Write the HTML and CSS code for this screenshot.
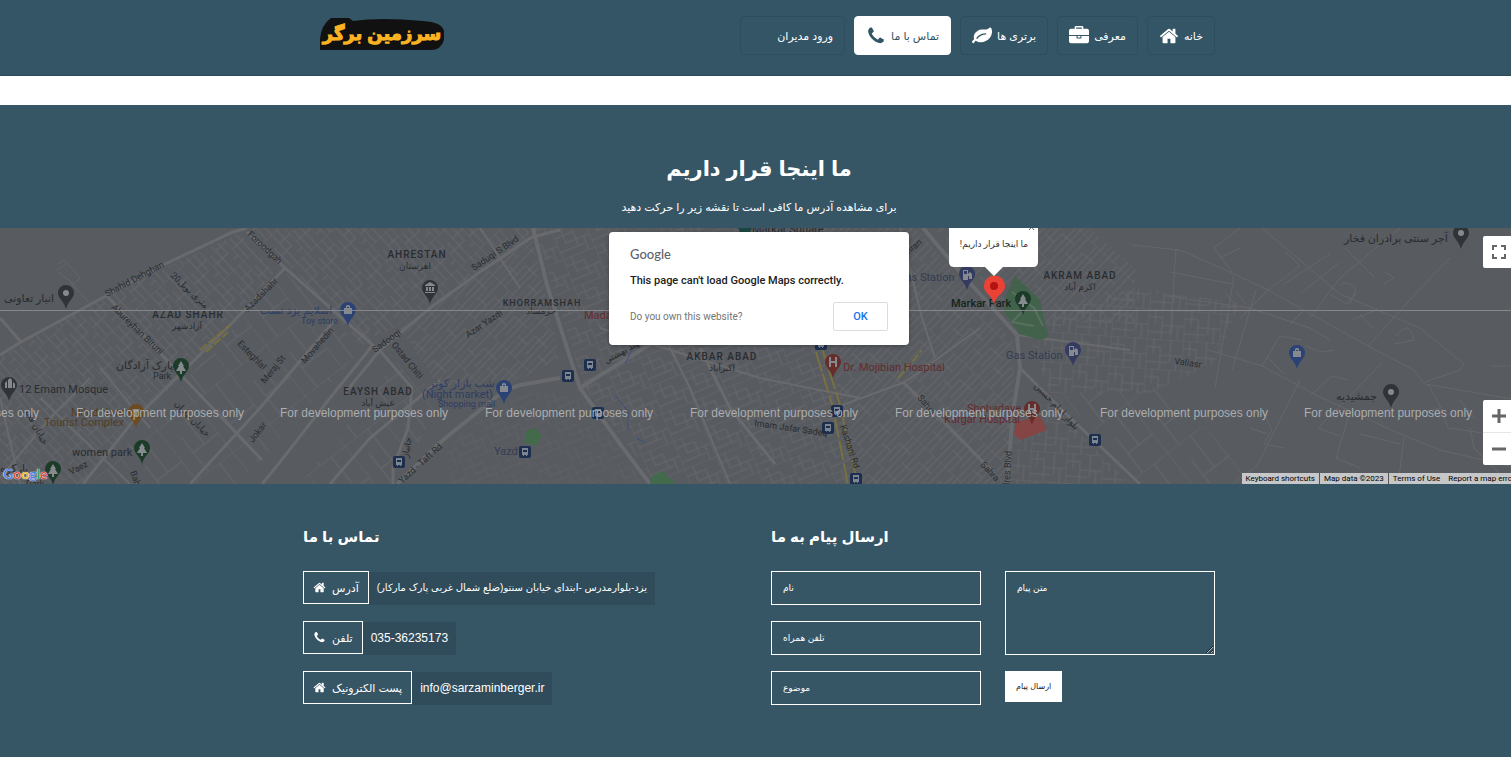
FILE: index.html
```html
<!DOCTYPE html>
<html lang="fa">
<head>
  <meta charset="UTF-8">
  <meta name="viewport" content="width=device-width, initial-scale=1.0">
  <title>سرزمین برگر</title>
  <link rel="stylesheet" href="styles.css">
</head>
<body>

<!-- shared icons -->
<svg class="defs" width="0" height="0">
  <symbol id="i-home" viewBox="0 0 1792 1792"><path d="M1472 992v480q0 26-19 45t-45 19h-384v-384h-256v384h-384q-26 0-45-19t-19-45v-480q0-1 .5-3t.5-3l575-474 575 474q1 2 1 6zm223-69l-62 74q-8 9-21 11h-3q-13 0-21-7l-692-577-692 577q-12 8-24 7-13-2-21-11l-62-74q-8-10-7-23.5t11-21.5l719-599q32-26 76-26t76 26l244 204v-195q0-14 9-23t23-9h192q14 0 23 9t9 23v408l219 182q10 8 11 21.5t-7 23.5z"/></symbol>
  <symbol id="i-phone" viewBox="0 0 1792 1792"><path d="M1600 1240q0 27-10 70.5t-21 68.5q-21 50-122 106-94 51-186 51-27 0-53-3.5t-57-12.5-47-14.5-55.5-20.5-49.5-18q-98-35-175-83-127-79-264-216t-216-264q-48-77-83-175-3-9-18-49.5t-20.5-55.5-14.5-47-12.5-57-3.5-53q0-92 51-186 56-101 106-122 25-11 68.5-21t70.5-10q14 0 21 3 18 6 53 76 11 19 30 54t35 63.5 31 53.5q3 4 17.5 25t21.5 35.5 7 28.5q0 20-28.5 50t-62 55-62 53-28.5 46q0 9 5 22.5t8.5 20.5 14 24 11.5 19q76 137 174 235t235 174q2 1 19 11.5t24 14 20.5 8.5 22.5 5q18 0 46-28.5t53-62 55-62 50-28.5q14 0 28.5 7t35.5 21.5 25 17.5q25 15 53.5 31t63.5 35 54 30q70 35 76 53 3 7 3 21z"/></symbol>
  <symbol id="i-case" viewBox="0 0 1792 1792"><path d="M640 256h512v-128h-512v128zm1152 640v480q0 66-47 113t-113 47h-1472q-66 0-113-47t-47-113v-480h672v160q0 26 19 45t45 19h320q26 0 45-19t19-45v-160h672zm-768 0v128h-256v-128h256zm768-480v384h-1792v-384q0-66 47-113t113-47h352v-160q0-40 28-68t68-28h576q40 0 68 28t28 68v160h352q66 0 113 47t47 113z"/></symbol>
  <symbol id="i-leaf" viewBox="0 0 1792 1792"><path d="M1280 704q0-26-19-45t-45-19q-172 0-318 49.5t-259.5 134-235.5 219.5q-19 21-19 45 0 26 19 45t45 19q24 0 45-19 27-24 74-71t67-66q137-124 268.5-176t313.5-52q26 0 45-19t19-45zm512-198q0 95-20 193-46 224-184.5 383t-357.5 268q-214 108-438 108-148 0-286-47-15-5-88-42t-96-37q-16 0-39.5 32t-45 70-52.5 70-60 32q-43 0-63.5-17.5t-45.5-59.5q-2-4-6-11t-5.5-10-3-9.5-1.5-13.5q0-35 31-73.5t68-65.5 68-56 31-48q0-4-14-38t-16-44q-9-51-9-104 0-115 43.5-220t119-184.5 170.5-139 204-95.5q55-18 145-25.5t179.5-9 178.5-6 163.5-24 113.5-56.5l29.5-29.5 29.5-28 27-20 36.5-16 43.5-4.5q39 0 70.5 46t47.5 112 24 124 8 96z"/></symbol>
  <symbol id="m-pin" viewBox="0 0 16 24"><path d="M8 0a8 8 0 0 1 8 8c0 5-6 8-8 16-2-8-8-11-8-16a8 8 0 0 1 8-8z"/></symbol>
  <symbol id="m-bus" viewBox="0 0 12 12"><rect width="12" height="12" rx="2" fill="#1c2f4f"/><path d="M3 2h6v7H8v1H7V9H5v1H4V9H3z" fill="#7d8590"/><path d="M4 4h4v2H4z" fill="#1c2f4f"/></symbol>
</svg>

<div class="page">

  <header class="site-header">
    <div class="container header-inner">
      <a class="logo" href="#" aria-label="سرزمین برگر">
        <svg width="126" height="35" viewBox="0 0 126 35">
          <path d="M1 34V23Q2 9 12 2H30L34 5Q62 1 104 5Q123 6 125 15V24Q122 34 112 34Z" fill="#111"/>
          <text x="63" y="24" text-anchor="middle" direction="rtl">سرزمین برگر</text>
        </svg>
      </a>
      <nav class="main-nav" dir="rtl">
        <a href="#home">خانه <svg><use href="#i-home"/></svg></a>
        <a href="#about">معرفی <svg><use href="#i-case"/></svg></a>
        <a href="#features">برتری ها <svg><use href="#i-leaf"/></svg></a>
        <a href="#contact" class="active">تماس با ما <svg><use href="#i-phone"/></svg></a>
        <a href="#login">ورود مدیران <svg></svg></a>
      </nav>
    </div>
  </header>

  <section class="contact" id="contact">
    <div class="section-title">
      <h1 dir="rtl">ما اینجا قرار داریم</h1>
      <p dir="rtl">برای مشاهده آدرس ما کافی است تا نقشه زیر را حرکت دهید</p>
    </div>

    <div class="map">
      <svg class="map-canvas" height="256" viewBox="0 0 1518 256" preserveAspectRatio="xMinYMin slice">
        <defs>
          <pattern id="g1" width="38" height="26" patternUnits="userSpaceOnUse" patternTransform="rotate(47)"><path d="M0 0H38M0 7H22M0 14H38M12 21H38M0 0V26M12 0V14M22 7V26M30 0V7"/></pattern>
          <pattern id="g2" width="34" height="30" patternUnits="userSpaceOnUse" patternTransform="rotate(-22)"><path d="M0 0H34M0 8H20M8 16H34M0 23H26M0 0V30M9 0V16M20 8V23M28 16V30"/></pattern>
          <pattern id="g3" width="44" height="28" patternUnits="userSpaceOnUse" patternTransform="rotate(-46)"><path d="M0 0H44M0 6H44M0 12H30M10 18H44M0 23H44M0 0V28M18 0V12M30 12V28"/></pattern>
          <pattern id="g4" width="36" height="30" patternUnits="userSpaceOnUse" patternTransform="rotate(4)"><path d="M0 0H36M0 8H14M14 16H36M0 23H22M0 0V30M7 0V15M14 8V30M24 0V23M30 16V30"/></pattern>
          <pattern id="g5" width="64" height="46" patternUnits="userSpaceOnUse" patternTransform="rotate(52)"><path d="M0 0H64M0 18H40M20 32H64M0 0V46M40 0V32"/></pattern>
        </defs>

        <rect width="1518" height="256" fill="#585b60"/>

        <!-- side streets -->
        <g class="streets">
          <path fill="url(#g1)" d="M108 66L240 5L275 45L83 256H0V130Z"/>
          <path fill="url(#g1)" d="M250 0H400L530 0L532 12L400 96L362 118Z"/>
          <path fill="url(#g5)" d="M285 44L362 120L240 256H90Z"/>
          <path fill="url(#g5)" d="M300 256L400 130L440 170L400 256Z"/>
          <path fill="url(#g3)" d="M400 100L532 12L560 130L520 152L440 160Z"/>
          <path fill="url(#g2)" d="M534 0H800L830 130L860 256H656L585 160Z"/>
          <path fill="url(#g3)" d="M800 0H915L1015 115L1010 256H862L830 130Z"/>
          <path fill="url(#g3)" d="M935 0H1090L1135 40V95H1020Z"/>
          <path fill="url(#g4)" d="M1024 95L1135 60L1240 75L1215 135L1150 165H1050Z"/>
          <path fill="url(#g4)" d="M1017 180L1050 175L1130 256H1010Z"/>
          <path fill="url(#g5)" d="M1060 165L1160 160L1270 256H1140Z"/>
          <path fill="url(#g2)" d="M520 165L580 165L645 256H450L445 215Z" opacity=".5"/>
        </g>
        <g class="lanes">
          <path d="M58 36L64 32L80 50L74 56L58 44M70 54L90 76M66 36L57 42"/>
          <path d="M1131 17L1180 22L1230 44L1268 62L1368 118L1414 142L1425 156L1518 172"/>
          <path d="M1176 22L1170 110M1234 48L1215 160M1256 62L1232 142M1170 44L1232 56M1166 68L1250 80L1310 100L1330 112"/>
          <path d="M1262 0L1340 66L1420 100L1464 136L1460 142L1425 154M1310 90L1340 50L1400 0M1286 24L1300 38L1268 62L1240 90"/>
          <path d="M1232 44L1214 20L1240 0M1220 30L1240 20M1284 56L1330 26M1300 66L1340 34M1345 20L1375 50M1368 118L1430 50L1450 30M1385 44L1394 50L1384 56"/>
          <path d="M1208 122L1262 138L1318 168L1400 206L1440 222L1518 240M1300 152L1288 176L1276 200L1258 236L1240 256"/>
          <path d="M1262 138L1280 108L1302 112M1310 168L1332 148L1348 152M1382 135L1318 200L1340 208M1348 190L1336 230L1360 240M1360 206L1400 216M1404 210L1398 256"/>
          <path d="M1262 182L1272 202L1264 216L1284 220M1250 200L1268 206M1428 156L1440 178L1448 200L1490 206M1440 180L1418 186M1470 200L1474 220L1510 256"/>
          <path d="M1340 58Q1348 50 1356 62L1350 76M1330 66L1346 76L1356 66M1360 86L1372 100M1352 92L1376 82M1396 108Q1410 90 1414 112L1394 116"/>
          <path d="M1236 64L1246 76M1226 66L1236 78M1306 118L1320 124L1334 122M1268 130L1284 146M1290 96L1302 84M1460 172L1474 190M1490 138H1518"/>
        </g>
        <g class="mains">
          <path d="M0 127L21 114L163 37L233 4L247 0M0 90L21 114"/>
          <path d="M247 4L285 40L350 97L382 125L412 160L408 200L393 240V256" />
          <path d="M285 40L230 97L133 193L83 256M107 68L160 125L222 190L262 232"/>
          <path d="M372 118L330 170L280 234L262 256M440 152L370 210L330 256M335 92L260 180L190 256"/>
          <path d="M532 9L480 44L430 80L380 122L345 165M532 9L560 2"/>
          <path d="M533 0L547 57L567 120L580 160L623 220L650 256M580 160L660 110L740 60" stroke-width="4"/>
          <path d="M560 150L520 157L505 162L443 212L397 256" stroke-width="4"/>
          <path d="M923 0L960 44L1017 107L1020 140L1013 184L1007 256" stroke-width="4"/>
          <path d="M1020 140L1060 180L1140 256M903 154L940 190L993 244M700 120L730 180L775 236"/>
        </g>
        <g class="thin-mains">
          <path d="M0 250L50 190L90 150M20 256L0 170M40 170L130 256M100 140L150 200M480 0L520 60M640 60L690 160L730 256M600 100L760 150L860 170M840 178L905 154L980 100M1017 107L1130 122M900 0L922 90L935 130"/>
        </g>

        <!-- parks, hospital, yellow roads -->
        <path fill="#42624c" d="M1015 48L1040 72L1046 100Q1052 110 1040 112L1020 106L1004 84L1006 68Z"/>
        <path fill="none" stroke="#59705f" stroke-width="2" d="M1012 64L1034 80L1043 98M1022 84L1012 94L1034 98"/>
        <path fill="#426a4b" d="M527 202L534 200L542 208L536 218L524 214ZM652 248L662 243L676 256H650Z"/>
        <path fill="#854545" d="M1016 194L1040 188L1047 202L1020 212L1014 206Z"/>
        <path class="yellow" d="M822 120L840 177L857 254M816 124L832 176L848 256" stroke-dasharray="20 3"/>
        <path class="yellow" d="M200 122L230 97M206 124L228 104M898 150L922 122" stroke-dasharray="9 2"/>
        <path d="M634 118L625 136M616 168L628 184V202M636 210L646 215" fill="none" stroke="#3c4f7d" stroke-width="1"/>

        <!-- pins -->
        <g fill="#303438"><use href="#m-pin" x="58" y="57" width="16" height="24"/><use href="#m-pin" x="1" y="149" width="16" height="24"/><use href="#m-pin" x="422" y="52" width="16" height="24"/><use href="#m-pin" x="1453" y="-3" width="16" height="24"/><use href="#m-pin" x="1383" y="156" width="16" height="24"/></g>
        <g fill="#1c3b29"><use href="#m-pin" x="173" y="130" width="16" height="24"/><use href="#m-pin" x="134" y="212" width="16" height="24"/><use href="#m-pin" x="45" y="233" width="16" height="24"/><use href="#m-pin" x="1015" y="63" width="16" height="24"/></g>
        <g fill="#2b4275"><use href="#m-pin" x="340" y="74" width="16" height="24"/><use href="#m-pin" x="496" y="152" width="16" height="24"/><use href="#m-pin" x="1289" y="117" width="16" height="24"/></g>
        <g fill="#333b60"><use href="#m-pin" x="959" y="38" width="16" height="24"/><use href="#m-pin" x="1065" y="114" width="16" height="24"/></g>
        <g fill="#672d2b"><use href="#m-pin" x="825" y="126" width="16" height="24"/><use href="#m-pin" x="1024" y="173" width="16" height="24"/></g>
        <use href="#m-pin" x="128" y="176" width="16" height="24" fill="#6d4a20"/>
        <g fill="#868a8f">
          <circle cx="66" cy="65" r="3"/><circle cx="1461" cy="5" r="3"/><circle cx="1391" cy="164" r="3"/>
          <path d="M5 160V155L7 153V160ZM8 160V152L10 150L12 152V160ZM13 160V154L15 156V160"/>
          <path d="M425 57L430 54L435 57V58H425ZM426 59H428V63H426ZM429 59H431V63H429ZM432 59H434V63H432ZM425 64H435V65H425Z"/>
          <path id="m-tree" d="M181 133L184 138H183L186 143H182V146H180V143H176L179 138H178Z"/>
          <use href="#m-tree" x="-39" y="82"/><use href="#m-tree" x="-128" y="103"/><use href="#m-tree" x="842" y="-67"/>
          <path id="m-bag" d="M344 80H346V78Q348 76 350 78V80H352V86H344ZM347 80H349V79H347Z"/>
          <use href="#m-bag" x="156" y="78"/><use href="#m-bag" x="949" y="43"/>
          <path id="m-gas" d="M963 42H968V46L970 44L972 46V51H969V48H968V52H963ZM964 43V46H967V43Z" fill-rule="evenodd"/>
          <use href="#m-gas" x="106" y="76"/>
          <path id="m-h" d="M829 129H831V133H835V129H837V139H835V135H831V139H829Z"/>
          <use href="#m-h" x="199" y="47"/>
          <path d="M132 181H140L137 185V188H135V185Z"/>
        </g>
        <g>
          <use href="#m-bus" x="562" y="142" width="12" height="12"/><use href="#m-bus" x="584" y="131" width="12" height="12"/><use href="#m-bus" x="592" y="179" width="12" height="12"/><use href="#m-bus" x="519" y="218" width="12" height="12"/><use href="#m-bus" x="393" y="228" width="12" height="12"/><use href="#m-bus" x="815" y="110" width="12" height="12"/><use href="#m-bus" x="831" y="177" width="12" height="12"/><use href="#m-bus" x="822" y="194" width="12" height="12"/><use href="#m-bus" x="850" y="245" width="12" height="12"/><use href="#m-bus" x="1089" y="206" width="12" height="12"/>
        </g>
        <path d="M738 0H752L750 4H740Z" fill="#1c4743"/>

        <!-- labels -->
        <g class="district">
          <text x="188" y="90">AZAD SHAHR</text><text x="417" y="30">AHRESTAN</text>
          <text class="small" x="542" y="78">KHORRAMSHAH</text>
          <text x="378" y="167">EAYSH ABAD</text><text x="722" y="132">AKBAR ABAD</text><text x="1080" y="51">AKRAM ABAD</text>
        </g>
        <g class="place-fa">
          <text x="187" y="101">آزادشهر</text><text x="415" y="41">اهرستان</text><text x="541" y="86" class="tiny">خرمشاد</text>
          <text x="378" y="178">عیش آباد</text><text x="722" y="143">اکبرآباد</text><text x="1080" y="62">اکرم آباد</text>
        </g>
        <g class="poi">
          <text x="19" y="165">12 Emam Mosque</text><text x="72" y="228">women park</text><text x="153" y="151" class="tiny">Park</text>
          <text x="116" y="141">پارک آزادگان</text><text x="4" y="74">انبار تعاونی</text><text x="1344" y="14">آجر سنتی برادران فخار</text><text x="1336" y="172">جمشیدیه</text>
          <text x="752" y="5">Markar Square</text><text x="0" y="244">پارکوه</text><text x="26" y="259" class="tiny">Park</text>
        </g>
        <g class="poi brown"><text x="71" y="188">Milad Noor</text><text x="44" y="198">Tourist Complex</text></g>
        <g class="poi blue"><text x="260" y="86">اسلایم یزد تست</text><text x="301" y="96" class="tiny">Toy store</text><text x="429" y="159">شب بازار کوثر</text><text x="422" y="170">(Night market)</text><text x="438" y="179" class="tiny">Shopping mall</text></g>
        <g class="poi indigo"><text x="494" y="227">Yazd</text><text x="898" y="53">Gas Station</text><text x="1006" y="131">Gas Station</text></g>
        <g class="poi red"><text x="584" y="91">Madar</text><text x="843" y="143">Dr. Mojibian Hospital</text><text x="967" y="184">Shohadaye</text><text x="944" y="195">Kargar Hospital</text></g>
        <text class="poi dark" x="951" y="79">Markar Park</text>
        <g class="road">
          <text transform="translate(107 69) rotate(-28)">Shahid Dehghan</text>
          <text transform="translate(247 7) rotate(43)">Foroodgah</text>
          <text transform="translate(170 48) rotate(43)">20متری بوبل</text>
          <text transform="translate(111 80) rotate(44)">Abureyhan Biruni</text>
          <text transform="translate(248 84) rotate(-45)">Azadshahr</text>
          <text transform="translate(237 116) rotate(46)">Esteghlal</text>
          <text transform="translate(265 156) rotate(-51)">Meraj St</text>
          <text transform="translate(305 136) rotate(-49)">Movahedin</text>
          <text transform="translate(174 176) rotate(46)">خیابان بیاران</text>
          <text transform="translate(253 215) rotate(-52)">Jokar</text>
          <text transform="translate(71 247) rotate(-27)">Vaez</text>
          <text transform="translate(24 182) rotate(62)">خیابان فجر</text>
          <text transform="translate(130 244) rotate(70)">Bahar</text>
          <text transform="translate(474 43) rotate(-34)">Saduqi S Blvd</text>
          <text transform="translate(375 125) rotate(-36)">Sadooqi</text>
          <text transform="translate(391 117) rotate(51)">Ostad Chiti</text>
          <text transform="translate(468 110) rotate(-34)">Azar Yazdi</text>
          <text transform="translate(402 256) rotate(-42)">Yazd - Taft Rd</text>
          <text transform="translate(408 230) rotate(-80)">جانباز</text>
          <text transform="translate(606 136) rotate(-30)">شهید بهشتی</text>
          <text transform="translate(754 198) rotate(8)">Imam Jafar Sadeq</text>
          <text transform="translate(840 198) rotate(72)">Kashani Rd</text>
          <text transform="translate(917 170) rotate(50)">Sahra</text><text transform="translate(980 237) rotate(47)">Sahra</text>
          <text transform="translate(1009 262) rotate(-86)">Fires Blvd</text>
          <text transform="translate(1034 158) rotate(47)">بلوار امام حسین</text>
          <text transform="translate(1174 136) rotate(8)">Valiasr</text>
          <text transform="translate(905 30) rotate(-40)">Imran</text>
        </g>
        <path d="M0 82.500H1518" stroke="#85878a"/>
        <g class="watermark">
          <text x="-129" y="189">For development purposes only</text>
          <text x="76" y="189">For development purposes only</text>
          <text x="280" y="189">For development purposes only</text>
          <text x="485" y="189">For development purposes only</text>
          <text x="690" y="189">For development purposes only</text>
          <text x="895" y="189">For development purposes only</text>
          <text x="1100" y="189">For development purposes only</text>
          <text x="1304" y="189">For development purposes only</text>
        </g>

        <!-- marker with its info window -->
        <path d="M994 77C992 66 984 66 984 58A10 10 0 0 1 1005 58C1005 66 996 66 994 77Z" fill="#ea4335"/>
        <circle cx="994" cy="58" r="4" fill="#b31412"/>
        <path d="M949 0H1038V34Q1038 39 1033 39H1003L994 48L985 39H954Q949 39 949 34Z" fill="#fff"/>
        <path d="M1029 -4L1034 2M1034 -4L1029 2" stroke="#666"/>
        <text class="info" x="994" y="19" text-anchor="middle" direction="rtl">ما اینجا قرار داریم!</text>
      </svg>

      <div class="map-dialog" role="dialog" aria-label="Google Maps">
        <div class="dialog-brand">Google</div>
        <p>This page can't load Google Maps correctly.</p>
        <div class="dialog-foot">
          <a href="#">Do you own this website?</a>
          <button type="button">OK</button>
        </div>
      </div>

      <button type="button" class="map-full" aria-label="Toggle fullscreen view">
        <svg width="14" height="14" viewBox="0 0 14 14" fill="none" stroke="#666" stroke-width="2"><path d="M1 5V1H5M9 1H13V5M13 9V13H9M5 13H1V9"/></svg>
      </button>
      <div class="map-zoom">
        <button type="button" aria-label="Zoom in"><svg width="14" height="14" viewBox="0 0 14 14"><path d="M0 5.500H5.500V0H8.500V5.500H14V8.500H8.500V14H5.500V8.500H0Z" fill="#666"/></svg></button>
        <button type="button" aria-label="Zoom out"><svg width="14" height="14" viewBox="0 0 14 14"><path d="M0 5.500H14V8.500H0Z" fill="#666"/></svg></button>
      </div>
      <a class="map-logo" href="#"><span>G</span><span>o</span><span>o</span><span>g</span><span>l</span><span>e</span></a>
      <div class="map-legal">
        <a href="#">Keyboard shortcuts</a><span>Map data ©2023</span><a href="#">Terms of Use</a><a href="#">Report a map error</a>
      </div>
    </div>

    <div class="container contact-grid">
      <div>
        <h2>تماس با ما</h2>
        <ul class="info-list">
          <li><span class="label"><svg><use href="#i-home"/></svg>آدرس</span><span class="value address" dir="rtl">یزد-بلوارمدرس -ابتدای خیابان سنتو(ضلع شمال غربی پارک مارکار)</span></li>
          <li><span class="label"><svg><use href="#i-phone"/></svg>تلفن</span><span class="value">035-36235173</span></li>
          <li><span class="label"><svg><use href="#i-home"/></svg>پست الکترونیک</span><span class="value">info@sarzaminberger.ir</span></li>
        </ul>
      </div>
      <div>
        <h2>ارسال پیام به ما</h2>
        <form class="message-form">
          <div class="fields">
            <input type="text" aria-label="نام" placeholder="نام">
            <input type="tel" aria-label="تلفن همراه" placeholder="تلفن همراه">
            <input type="text" aria-label="موضوع" placeholder="موضوع">
          </div>
          <div class="fields">
            <textarea aria-label="متن پیام" placeholder="متن پیام"></textarea>
            <button type="submit">ارسال پیام</button>
          </div>
        </form>
      </div>
    </div>
  </section>

</div>
</body>
</html>
```
FILE: styles.css
```css
* { box-sizing: border-box; }
html, body {
  margin: 0; padding: 0;
}
body {
  font-family: "Liberation Sans", "DejaVu Sans", sans-serif;
  font-size: 12px;
  line-height: 20px;
  color: #fff;
  background: #fff;
  overflow-x: hidden;
}
a { color: inherit; text-decoration: none; }
button, input, textarea { font: inherit; }
.defs { position: absolute; }
.page {
  margin-right: -7px;
  min-height: 100vh;
  display: flex;
  flex-direction: column;
}
.container {
  width: 100%;
  max-width: 912px;
  margin: 0 auto;
}

/* header */
.site-header {
  background: #345565;
  border-bottom: 1px solid #2d4b59;
  padding: 16px 0 20px;
}
.header-inner {
  display: flex;
  justify-content: space-between;
  align-items: flex-start;
}
.logo { margin-left: 16px; }
.logo svg { display: block; }
.logo text {
  font-size: 18px;
  font-weight: bold;
  fill: #fcb322;
  stroke: #fcb322;
  stroke-width: 1px;
}
.main-nav {
  display: flex;
  gap: 9px;
}
.main-nav a {
  display: flex;
  align-items: center;
  gap: 5px;
  height: 39px;
  padding: 0 11px;
  border: 1px solid #2f4e5d;
  border-radius: 4px;
  font-size: 11px;
}
.main-nav svg {
  width: 20px;
  height: 20px;
  fill: #fff;
}
.main-nav .active {
  background: #fff;
  border-color: #fff;
  color: #345565;
}
.main-nav .active svg { fill: #345565; }

/* contact section */
.contact {
  flex: 1;
  margin-top: 29px;
  padding-bottom: 52px;
  background: #365565;
}
.section-title {
  padding-top: 46px;
  text-align: center;
}
.section-title h1 {
  margin: 0;
  font-size: 21px;
  line-height: 36px;
}
.section-title p {
  margin: 0;
  padding: 10px 0 11px;
  font-size: 11px;
}

/* map */
.map {
  position: relative;
  height: 256px;
  overflow: hidden;
  direction: ltr;
  font-family: Roboto, "DejaVu Sans", sans-serif;
}
.map-canvas {
  display: block;
  width: 100%;
}
.streets path { stroke: none; }
pattern path { stroke: #65676b; fill: none; }
.lanes { stroke: #67676a; fill: none; }
.mains { stroke: #696a6d; stroke-width: 3px; fill: none; }
.thin-mains { stroke: #696a6d; stroke-width: 2px; fill: none; }
.yellow { fill: none; stroke: #78703f; stroke-width: 2px; }
.map text { fill: #292c30; font-size: 11px; }
.map .district text {
  font-size: 10px;
  font-weight: 500;
  letter-spacing: 1px;
  text-anchor: middle;
}
.map .district .small { font-size: 9px; }
.map .place-fa text { font-size: 9px; text-anchor: middle; }
.map text.tiny { font-size: 9px; }
.map .brown text { fill: #533d25; }
.map .blue text { fill: #2d3d63; }
.map .indigo text { fill: #343b52; }
.map .red text { fill: #642b2e; }
.map text.dark { fill: #14251c; font-weight: 500; }
.map .road text { font-size: 9px; }
.map .watermark text {
  font-family: "Liberation Sans", sans-serif;
  font-size: 12px;
  fill: #abadaf;
}
.map text.info { fill: #333; font-size: 9px; }

.map-dialog {
  position: absolute;
  top: 4px;
  left: 50%;
  width: 300px;
  margin-left: -150px;
  padding: 13px 21px 14px;
  background: #fff;
  border-radius: 4px;
  box-shadow: 0 1px 4px rgba(0, 0, 0, 0.3);
  color: #212121;
}
.dialog-brand {
  font-family: Lato, sans-serif;
  font-size: 13px;
  font-weight: 500;
  line-height: 18px;
  color: #5f6368;
}
.map-dialog p {
  margin: 8px 0 11px;
  font-size: 11px;
  font-weight: 500;
}
.dialog-foot {
  display: flex;
  justify-content: space-between;
  align-items: center;
  font-size: 10px;
  color: #757575;
}
.dialog-foot button {
  width: 55px;
  height: 29px;
  background: #fff;
  border: 1px solid #dadce0;
  border-radius: 2px;
  color: #1a73e8;
  font-size: 11px;
  font-weight: 500;
}
.map-full, .map-zoom {
  position: absolute;
  right: 3px;
  width: 32px;
  background: #fff;
  border: 0;
  border-radius: 2px;
}
.map-full {
  top: 8px;
  height: 32px;
  padding: 9px;
}
.map-full svg { display: block; }
.map-zoom { bottom: 19px; }
.map-zoom button {
  display: block;
  width: 100%;
  height: 32px;
  padding: 9px;
  background: none;
  border: 0;
}
.map-zoom button svg { display: block; }
.map-zoom button + button { border-top: 1px solid #e6e6e6; height: 33px; }
.map-logo {
  position: absolute;
  left: 3px;
  bottom: 0;
  font-family: Lato, sans-serif;
  font-size: 14px;
  font-weight: bold;
  color: #4b83e6;
  text-shadow: 0 0 1px #fff, 0 0 1px #fff;
}
.map-logo span:nth-child(2), .map-logo span:nth-child(6) { color: #dd5145; }
.map-logo span:nth-child(3) { color: #e8b92c; }
.map-logo span:nth-child(5) { color: #3fa05a; }
.map-legal {
  position: absolute;
  right: -1px;
  bottom: 0;
  display: flex;
  background: #c6c7c9;
  color: #000;
  font-size: 8px;
  line-height: 11px;
}
.map-legal a, .map-legal span { padding: 0 4px; }
.map-legal span { border: 1px solid #555; border-width: 0 1px; }

/* contact info and form */
.contact-grid {
  display: grid;
  grid-template-columns: 1fr 1fr;
  gap: 24px;
  padding-top: 43px;
}
.contact-grid h2 {
  margin: 0 0 24px;
  font-size: 15px;
  line-height: 20px;
}
.info-list {
  list-style: none;
  margin: 0;
  padding: 0;
  display: grid;
  gap: 16px;
}
.info-list li {
  display: flex;
  height: 34px;
}
.info-list .label {
  display: flex;
  align-items: center;
  gap: 6px;
  height: 33px;
  padding: 0 9px;
  border: 1px solid #fff;
  font-size: 11px;
}
.info-list svg {
  width: 13px;
  height: 13px;
  fill: #fff;
}
.info-list .value {
  margin-top: 1px;
  padding: 6px 8px;
  background: #304c5a;
}
.info-list .address { font-size: 10px; }
.message-form {
  display: grid;
  grid-template-columns: 1fr 1fr;
  gap: 24px;
}
.fields {
  display: flex;
  flex-direction: column;
  align-items: flex-start;
  gap: 16px;
}
.fields input, .fields textarea {
  display: block;
  width: 100%;
  height: 34px;
  padding: 6px 11px;
  background: transparent;
  border: 1px solid #fff;
  border-radius: 0;
  color: #fff;
  font-size: 9px;
}
.fields textarea { height: 84px; }
.fields ::placeholder { color: #fff; opacity: 1; }
.fields button {
  height: 31px;
  padding: 0 11px;
  background: #fff;
  border: 0;
  color: #222;
  font-size: 8px;
}
@media (max-width: 900px) {
  .contact-grid, .message-form { grid-template-columns: 1fr; }
  .container { padding-left: 16px; padding-right: 16px; }
  .header-inner, .main-nav { flex-wrap: wrap; }
}
```
